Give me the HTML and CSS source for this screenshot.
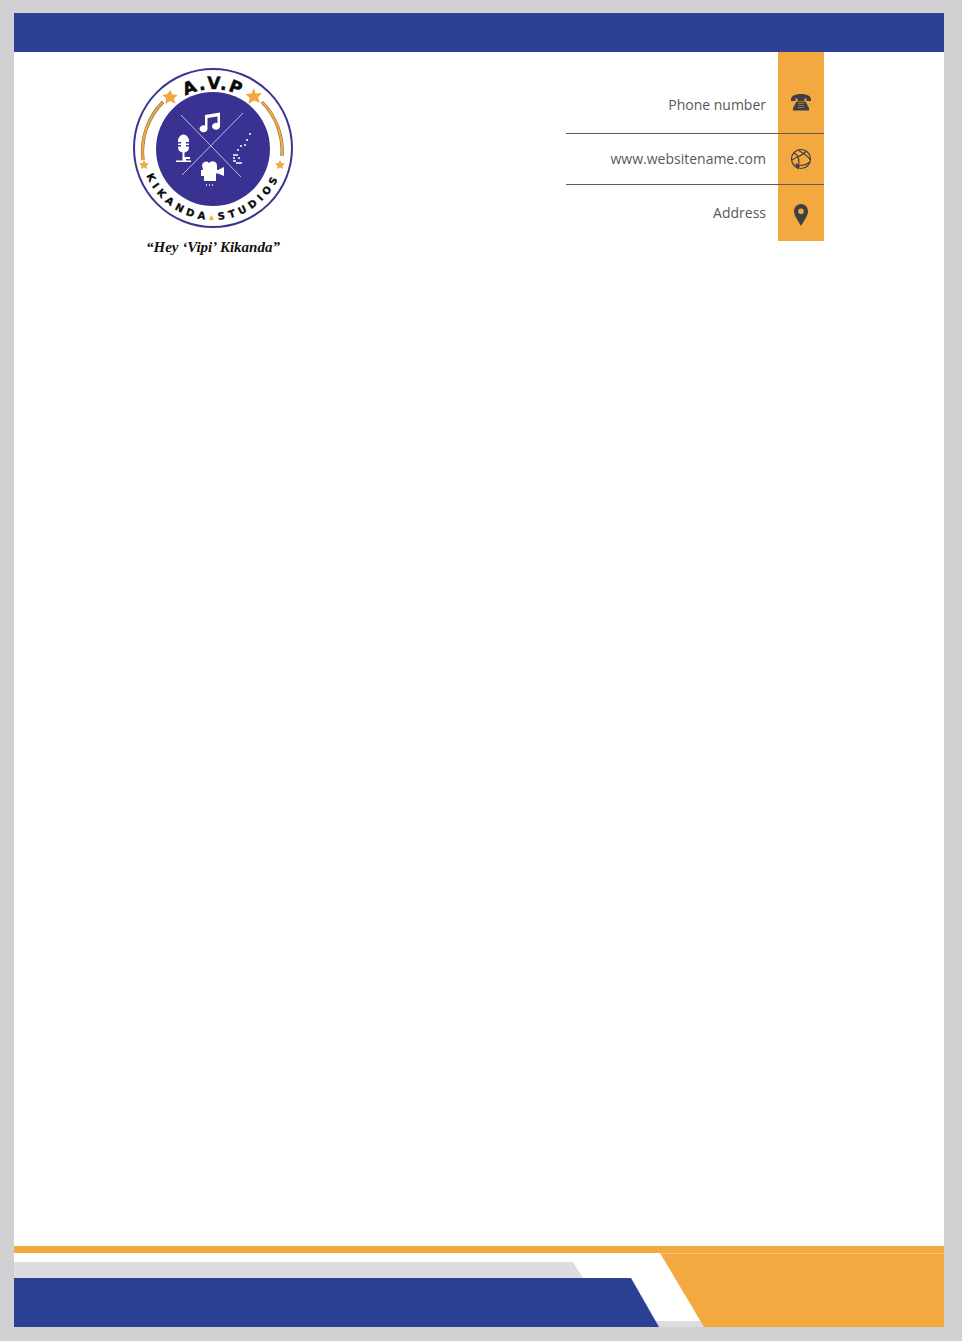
FILE: index.html
```html
<!DOCTYPE html>
<html lang="en">
<head>
<meta charset="utf-8">
<title>Letterhead</title>
<link rel="stylesheet" href="styles.css">
</head>
<body>
<main class="sheet">
  <header class="top-bar"></header>
  <section class="masthead">
    <svg class="logo" viewBox="128 63 170 200" width="170" height="200" role="img" aria-label="A.V.P Kikanda Studios logo">
      <defs>
        <path id="arcTop" d="M154 148 A59 59 0 0 1 272 148"/>
        <path id="arcBottom" d="M141 148 A72 72 0 0 0 285 148"/>
      </defs>
      <circle class="ring" cx="213" cy="148" r="79"/>
      <circle class="disc" cx="213" cy="149" r="57"/>
      <path class="arc-edge" d="M143 160 A70 70 0 0 1 163 102"/>
      <path class="arc-gold" d="M143 160 A70 70 0 0 1 163 102"/>
      <path class="arc-edge" d="M282 156 A70 70 0 0 0 262 102"/>
      <path class="arc-gold" d="M282 156 A70 70 0 0 0 262 102"/>
      <polygon class="gold" points="170,90 172.500,94.500 177.500,95 174,98.500 175.500,103.500 170,101 165.500,104 166,98.500 162.500,95 167.500,94"/>
      <polygon class="gold" points="254,88 255.500,93.500 262,93 258,97.500 260,103 254,100.500 248.500,104 249.500,98 245.500,94 251.500,93.500"/>
      <polygon class="gold" points="144,160 145.500,163 149,163.500 146.500,166 147,169 144,167.500 141,169 141.500,166 139,163.500 142.500,163"/>
      <polygon class="gold" points="280,160 281.500,163 285,163.500 282.500,166 283,169 280,167.500 277,169 277.500,166 275,163.500 278.500,163"/>
      <text class="logo-top"><textPath href="#arcTop" startOffset="50%">A.V.P</textPath></text>
      <text class="logo-bottom"><textPath href="#arcBottom" startOffset="50%">KIKANDA<tspan class="logo-sep">▴</tspan>STUDIOS</textPath></text>
      <path class="cross" d="M181 115 L241 177 M243 113 L182 175"/>
      <path class="white" d="M205 115 L220 112.500 V126 A4 3.500 0 1 1 217.500 123 V116.500 L207.500 118 V128.500 A4 3.500 0 1 1 205 125.500 Z"/>
      <path class="white" d="M178 141 A5.500 6.500 0 0 1 189 141 V142 H186 V143.500 H189 V145 H186 V146.500 H189 V147 A5.500 5.500 0 0 1 184.500 152.500 V157 H190 V159 H186 V160.500 H191 V162 H176 V160.500 H182.500 V152.500 A5.500 5.500 0 0 1 178 147 V146.500 H181 V145 H178 V143.500 H181 V142 H178 Z"/>
      <path class="white" d="M202 165 A4 4 0 0 1 209 163 A4.500 4.500 0 0 1 217 166 V170 H218 L224 167 V176 L218 173.500 H216 V181 H204 V176 H201 V170 H203 Z"/>
      <path class="dots" d="M206 185 h1 M209 185 h1 M212 185 h1 M249 134 h2 M246 140 h2 M244 145 h2 M240 146 h2 M237 150 h2 M233 155 h5 M233 158 h2 M238 158 h2 M233 161 h3 M236 163 h6"/>
    </svg>
    <p class="tagline">“Hey ‘Vipi’ Kikanda”</p>
    <div class="contact">
      <div class="row row-phone">
        <span class="label">Phone number</span>
        <span class="icon-cell">
          <svg class="icon icon-phone" viewBox="0 0 20 17"><path d="M0 5.500 C0 1.500 5 0 10 0 S20 1.500 20 5.500 V7 H15.500 V4.500 H13.500 V7 H6.500 V4.500 H4.500 V7 H0 Z M5.500 7.500 H14.500 L18 14 V16.500 H2 V14 Z"/><path class="keypad" d="M7.500 9.500 h5 M7.500 11.500 h5 M7.500 13.500 h5"/></svg>
        </span>
      </div>
      <div class="row row-web">
        <span class="label">www.websitename.com</span>
        <span class="icon-cell">
          <svg class="icon icon-globe" viewBox="0 0 22 22"><circle class="globe-line" cx="11" cy="11" r="9.500"/><path class="globe-line" d="M4 4.500 C9 8 10 14 7.500 20 M8 2 C13 5 19 9 20.500 12 M2 12 C6 9 12 8 16 3.500 M6 16 C10 18 15 18 20 14"/><path d="M5 15.500 L10 18 L7.500 21.500 Z"/></svg>
        </span>
      </div>
      <div class="row row-address">
        <span class="label">Address</span>
        <span class="icon-cell">
          <svg class="icon icon-pin" viewBox="0 0 14 22"><path fill-rule="evenodd" d="M7 0 A7 7 0 0 1 14 7 C14 12 9 18 7 22 C5 18 0 12 0 7 A7 7 0 0 1 7 0 Z M7 4.500 A2.800 2.800 0 1 0 7 10.100 A2.800 2.800 0 1 0 7 4.500 Z"/></svg>
        </span>
      </div>
    </div>
  </section>
  <div class="body-space"></div>
  <footer class="footer">
    <div class="footer-stripe"></div>
    <svg class="footer-art" viewBox="0 0 930 74" preserveAspectRatio="none">
      <polygon class="f-grey" points="0,9 559,9 569,25 0,25"/>
      <polygon class="f-grey" points="640,68 690,68 690,74 640,74"/>
      <polygon class="f-blue" points="0,25 617,25 645,74 0,74"/>
      <polygon class="f-orange" points="646,0 930,0 930,74 690,74"/>
      <line class="f-hair" x1="646" y1="0.500" x2="930" y2="0.500"/>
    </svg>
  </footer>
</main>
</body>
</html>
```
FILE: styles.css
```css
html, body {
  margin: 0;
  padding: 0;
}

body {
  background: #d1d1d3;
  height: 1341px;
  box-sizing: border-box;
  padding: 13px 18px 14px 14px;
  font-family: "Open Sans", "Liberation Sans", sans-serif;
  overflow: hidden;
}

.sheet {
  display: flex;
  flex-direction: column;
  height: 100%;
  background: #fff;
}

.top-bar {
  height: 39px;
  background: #2c4095;
  flex: none;
}

.masthead {
  position: relative;
  display: flex;
  align-items: flex-start;
  padding-left: 114px;
  flex: none;
}

.logo {
  display: block;
  margin-top: 11px;
  flex: none;
}

.ring { fill: #fff; stroke: #3b3590; stroke-width: 2; }
.disc { fill: #3a3292; }
.arc-edge { fill: none; stroke: #6b5a44; stroke-width: 3.2; }
.arc-gold { fill: none; stroke: #efa93f; stroke-width: 2.4; }
.gold { fill: #efa93f; }
.cross { stroke: #c9c8e6; stroke-width: 0.9; fill: none; }
.white { fill: #fff; }
.dots { stroke: #fff; stroke-width: 1.6; fill: none; }

.logo-top {
  font-family: "DejaVu Sans", sans-serif;
  font-weight: 700;
  font-size: 17px;
  letter-spacing: 1.5px;
  text-anchor: middle;
  stroke: #0a0a0a;
  stroke-width: 0.5;
  fill: #0a0a0a;
}

.logo-bottom {
  font-family: "DejaVu Sans", sans-serif;
  font-weight: 700;
  font-size: 10px;
  letter-spacing: 4.2px;
  text-anchor: middle;
  stroke: #0a0a0a;
  stroke-width: 0.3;
  fill: #0a0a0a;
}

.logo-sep { fill: #efa93f; stroke: none; }

.tagline {
  position: absolute;
  left: 131px;
  top: 185px;
  width: 136px;
  margin: 0;
  font-family: "Liberation Serif", serif;
  font-style: italic;
  font-weight: 700;
  font-size: 15px;
  line-height: 20px;
  text-align: center;
  white-space: nowrap;
  color: #111;
}

.contact {
  margin-left: auto;
  margin-right: 120px;
  width: 258px;
  display: flex;
  flex-direction: column;
  flex: none;
}

.row {
  display: flex;
  box-sizing: border-box;
}

.row-phone { height: 82px; border-bottom: 1px solid #5c5c5c; }
.row-web { height: 51px; border-bottom: 1px solid #5c5c5c; }
.row-address { height: 56px; }

.label {
  flex: 1;
  text-align: right;
  padding-right: 12px;
  font-size: 14px;
  line-height: 20px;
  color: #58595b;
}

.row-phone .label { padding-top: 43px; }
.row-web .label { padding-top: 15px; }
.row-address .label { padding-top: 18px; }

.icon-cell {
  width: 46px;
  flex: none;
  background: #f4a940;
  display: flex;
  justify-content: center;
  box-sizing: border-box;
}

.row-phone .icon-cell { padding-top: 42px; }
.row-web .icon-cell { padding-top: 14px; }
.row-address .icon-cell { padding-top: 19px; }

.icon { display: block; fill: #3f3f42; }
.icon-phone { width: 20px; height: 17px; }
.icon-globe { width: 22px; height: 22px; }
.icon-pin { width: 14px; height: 22px; }
.keypad { stroke: #f4a940; stroke-width: 1; stroke-dasharray: 1 1; fill: none; }
.globe-line { fill: none; stroke: #3f3f42; stroke-width: 1.2; }

.body-space { flex: 1; }

.footer { flex: none; }

.footer-stripe {
  height: 7px;
  background: #f4a940;
}

.footer-art {
  display: block;
  width: 100%;
  height: 74px;
}

.f-grey { fill: #dcdddf; }
.f-blue { fill: #2c4095; }
.f-orange { fill: #f4a940; }
.f-hair { stroke: #f8c078; stroke-width: 1; }
```
